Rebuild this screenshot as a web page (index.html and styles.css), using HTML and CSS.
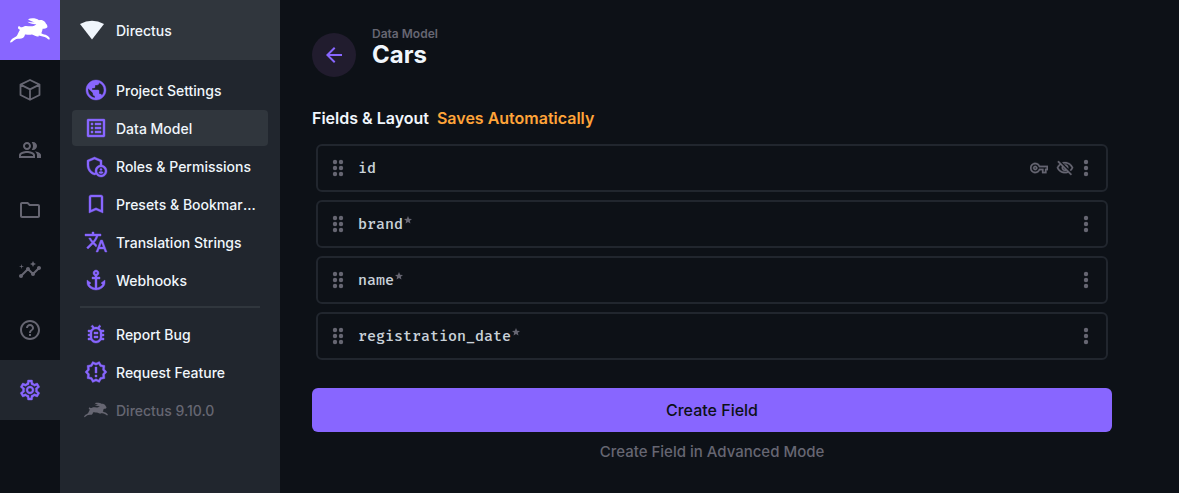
FILE: index.html
```html
<!DOCTYPE html>
<html lang="en">
<head>
<meta charset="utf-8">
<meta name="viewport" content="width=device-width, initial-scale=1">
<title>Cars · Data Model · Directus</title>
<link rel="stylesheet" href="styles.css">
</head>
<body>
<svg class="sprite" aria-hidden="true">
  <symbol id="rabbit" viewBox="0 0 120 74">
    <path d="M0 73C1 67 5 61 13 58C19 56 22 52 24 46C26 42 28 38 30 35C27 34 24 32 24 28C24 24 29 23 32 27C36 28 38 26 43 24C52 22 59 26 67 24C73 23 75 21 79 18C70 19 59 16 52 11C60 13 68 12 74 13C67 9 59 8 54 3C63 -1 79 0 87 6C96 3 107 10 108 17C111 20 113 23 112 27C109 31 103 31 98 32C97 37 96 41 94 45C99 49 106 48 111 52C116 55 120 59 119 63C115 65 112 62 109 59C103 55 94 54 86 52C88 55 83 56 79 54C73 53 70 49 65 49C57 51 50 48 45 49C44 56 40 60 34 61C27 62 20 61 15 65C10 68 7 73 0 73Z"/>
  </symbol>
  <symbol id="dots" viewBox="0 0 24 24"><circle cx="12" cy="6" r="2.2"/><circle cx="12" cy="12" r="2.2"/><circle cx="12" cy="18" r="2.2"/></symbol>
  <symbol id="drag" viewBox="0 0 24 24"><circle cx="9" cy="6" r="2.2"/><circle cx="15" cy="6" r="2.2"/><circle cx="9" cy="12" r="2.2"/><circle cx="15" cy="12" r="2.2"/><circle cx="9" cy="18" r="2.2"/><circle cx="15" cy="18" r="2.2"/></symbol>
  <symbol id="star" viewBox="2 2 20 20"><path d="M12 17.27 18.18 21l-1.64-7.03L22 9.24l-7.19-.61L12 2 9.19 8.63 2 9.24l5.46 4.73L5.82 21z"/></symbol>
</svg>
<div class="app">
  <nav class="modules" aria-label="Modules">
    <a class="module module-logo" href="#" aria-label="Directus"><svg class="logo"><use href="#rabbit"/></svg></a>
    <a class="module" href="#" aria-label="Content"><svg class="icon line" viewBox="0 0 24 24"><path d="M12 2l9.500 4.600v10.400L12 21.800 2.500 17V6.600zM2.500 6.600 12 11.400l9.500-4.800M12 11.400v10.400"/></svg></a>
    <a class="module" href="#" aria-label="Users"><svg class="icon" viewBox="0 0 24 24"><path d="M16.67 13.13C18.04 14.06 19 15.32 19 17v3h4v-3c0-2.18-3.57-3.47-6.33-3.87zM15 12c2.21 0 4-1.790 4-4s-1.790-4-4-4c-.47 0-.91.1-1.330.24C14.500 5.270 15 6.580 15 8s-.5 2.730-1.330 3.760c.42.14.86.24 1.330.24zM9 12c2.210 0 4-1.790 4-4s-1.790-4-4-4-4 1.790-4 4 1.790 4 4 4zm0-6c1.100 0 2 .9 2 2s-.9 2-2 2-2-.9-2-2 .9-2 2-2zm0 7c-2.670 0-8 1.340-8 4v3h16v-3c0-2.660-5.330-4-8-4zm6 5H3v-.99C3.200 16.290 6.300 15 9 15s5.800 1.290 6 2v1z"/></svg></a>
    <a class="module" href="#" aria-label="Files"><svg class="icon" viewBox="0 0 24 24"><path d="M9.170 6l2 2H20v10H4V6h5.170M10 4H4c-1.100 0-1.990.9-1.990 2L2 18c0 1.100.9 2 2 2h16c1.100 0 2-.9 2-2V8c0-1.100-.9-2-2-2h-8l-2-2z"/></svg></a>
    <a class="module" href="#" aria-label="Insights"><svg class="icon" viewBox="0 0 24 24"><path d="M21 8c-1.450 0-2.260 1.440-1.930 2.510l-3.550 3.560c-.3-.09-.74-.09-1.040 0l-2.550-2.550C12.270 10.450 11.460 9 10 9c-1.450 0-2.270 1.440-1.930 2.520l-4.560 4.550C2.440 15.740 1 16.550 1 18c0 1.100.9 2 2 2 1.450 0 2.260-1.440 1.930-2.510l4.550-4.560c.3.09.74.09 1.040 0l2.550 2.550C12.730 16.550 13.540 18 15 18c1.450 0 2.270-1.440 1.930-2.520l3.560-3.550C21.560 12.260 23 11.450 23 10c0-1.100-.9-2-2-2z"/><path d="M15 9l.94-2.070L18 6l-2.060-.93L15 3l-.92 2.070L12 6l2.080.93zM3.500 11L4 9l2-.5L4 8l-.5-2L3 8l-2 .5L3 9z"/></svg></a>
    <a class="module" href="#" aria-label="Help"><svg class="icon" viewBox="0 0 24 24"><path d="M11 18h2v-2h-2v2zm1-16C6.480 2 2 6.480 2 12s4.480 10 10 10 10-4.480 10-10S17.520 2 12 2zm0 18c-4.410 0-8-3.590-8-8s3.590-8 8-8 8 3.590 8 8-3.590 8-8 8zm0-14c-2.210 0-4 1.790-4 4h2c0-1.100.9-2 2-2s2 .9 2 2c0 2-3 1.750-3 5h2c0-2.250 3-2.500 3-5 0-2.210-1.790-4-4-4z"/></svg></a>
    <a class="module module-active" href="#" aria-label="Settings" aria-current="true"><svg class="icon" viewBox="0 0 24 24"><path d="M19.43 12.98c.04-.32.07-.64.07-.98 0-.34-.03-.66-.07-.98l2.11-1.65c.19-.15.24-.42.12-.64l-2-3.46c-.09-.16-.26-.25-.44-.25-.06 0-.12.01-.17.03l-2.49 1c-.52-.4-1.08-.73-1.69-.98l-.38-2.65C14.46 2.18 14.25 2 14 2h-4c-.25 0-.46.18-.49.42l-.38 2.65c-.61.25-1.17.59-1.69.98l-2.49-1c-.06-.02-.12-.03-.18-.03-.17 0-.34.09-.43.25l-2 3.46c-.13.22-.07.49.12.64l2.11 1.65c-.04.32-.07.65-.07.98 0 .33.03.66.07.98l-2.11 1.65c-.19.15-.24.42-.12.64l2 3.46c.09.16.26.25.44.25.06 0 .12-.01.17-.03l2.49-1c.52.4 1.08.73 1.69.98l.38 2.65c.03.24.24.42.49.42h4c.25 0 .46-.18.49-.42l.38-2.65c.61-.25 1.17-.59 1.69-.98l2.49 1c.06.02.12.03.18.03.17 0 .34-.09.43-.25l2-3.46c.12-.22.07-.49-.12-.64l-2.11-1.65zm-1.98-1.71c.04.31.05.52.05.73 0 .21-.02.43-.05.73l-.14 1.13.89.7 1.08.84-.7 1.21-1.27-.51-1.04-.42-.9.68c-.43.32-.84.56-1.25.73l-1.06.43-.16 1.13-.2 1.35h-1.4l-.19-1.35-.16-1.13-1.06-.43c-.43-.18-.83-.41-1.23-.71l-.91-.7-1.06.43-1.27.51-.7-1.21 1.08-.84.89-.7-.14-1.13c-.03-.31-.05-.54-.05-.74s.02-.43.05-.73l.14-1.13-.89-.7-1.08-.84.7-1.21 1.27.51 1.04.42.9-.68c.43-.32.84-.56 1.25-.73l1.06-.43.16-1.13.2-1.35h1.39l.19 1.35.16 1.13 1.06.43c.43.18.83.41 1.23.71l.91.7 1.06-.43 1.27-.51.7 1.21-1.07.85-.89.7.14 1.13zM12 8c-2.21 0-4 1.79-4 4s1.79 4 4 4 4-1.79 4-4-1.79-4-4-4zm0 6c-1.1 0-2-.9-2-2s.9-2 2-2 2 .9 2 2-.9 2-2 2z"/></svg></a>
  </nav>

  <aside class="sidebar">
    <div class="project"><svg class="icon" viewBox="0 0 24 24"><path d="M0 6Q12-.5 24 6L12 21.500z"/></svg><span class="label">Directus</span></div>
    <nav class="menu" aria-label="Settings">
      <a class="item" href="#"><svg class="icon" viewBox="0 0 24 24"><path d="M12 2C6.480 2 2 6.480 2 12s4.480 10 10 10 10-4.480 10-10S17.520 2 12 2zm-1 17.930c-3.950-.49-7-3.850-7-7.930 0-.62.08-1.210.21-1.790L9 15v1c0 1.100.9 2 2 2v1.930zm6.900-2.540c-.26-.81-1-1.390-1.900-1.390h-1v-3c0-.55-.45-1-1-1H8v-2h2c.55 0 1-.45 1-1V7h2c1.100 0 2-.9 2-2v-.41c2.930 1.190 5 4.060 5 7.410 0 2.080-.8 3.970-2.100 5.390z"/></svg><span class="label">Project Settings</span></a>
      <a class="item item-active" href="#" aria-current="page"><svg class="icon" viewBox="0 0 24 24"><path d="M19 5v14H5V5h14m1.100-2H3.900c-.5 0-.9.4-.9.9v16.200c0 .4.4.9.9.9h16.200c.4 0 .9-.5.9-.9V3.900c0-.5-.5-.9-.9-.9zM11 7h6v2h-6V7zm0 4h6v2h-6v-2zm0 4h6v2h-6zM7 7h2v2H7zm0 4h2v2H7zm0 4h2v2H7z"/></svg><span class="label">Data Model</span></a>
      <a class="item" href="#"><svg class="icon" viewBox="0 0 24 24"><path d="M18 11.090V6.270L10.500 3 3 6.270v4.910c0 4.540 3.200 8.790 7.500 9.820.55-.13 1.080-.32 1.600-.55C13.180 21.990 14.970 23 17 23c3.310 0 6-2.690 6-6 0-2.970-2.160-5.430-5-5.910zM11 17c0 .56.08 1.110.23 1.620-.24.11-.48.22-.73.3-3.170-1-5.500-4.240-5.500-7.740v-3.600l5.500-2.400 5.500 2.400v3.510c-2.840.48-5 2.940-5 5.910zm6 4c-2.210 0-4-1.790-4-4s1.790-4 4-4 4 1.790 4 4-1.790 4-4 4z"/><circle cx="17" cy="15.500" r="1.120"/><path d="M17 17.500c-.73 0-2.190.36-2.240 1.080.5.71 1.320 1.170 2.240 1.170s1.740-.46 2.240-1.170c-.05-.72-1.510-1.080-2.240-1.080z"/></svg><span class="label">Roles &amp; Permissions</span></a>
      <a class="item" href="#"><svg class="icon" viewBox="0 0 24 24"><path d="M17 3H7c-1.100 0-1.990.9-1.990 2L5 21l7-3 7 3V5c0-1.100-.9-2-2-2zm0 15l-5-2.180L7 18V5h10v13z"/></svg><span class="label">Presets &amp; Bookmarks</span></a>
      <a class="item" href="#"><svg class="icon" viewBox="0 0 24 24"><path d="M12.870 15.070l-2.540-2.510.03-.03c1.740-1.940 2.980-4.170 3.710-6.530H17V4h-7V2H8v2H1v1.990h11.170C11.500 7.920 10.440 9.750 9 11.350 8.070 10.320 7.300 9.190 6.690 8h-2c.73 1.630 1.730 3.170 2.980 4.560l-5.090 5.020L4 19l5-5 3.110 3.110.76-2.040zM18.500 10h-2L12 22h2l1.120-3h4.750L21 22h2l-4.500-12zm-2.620 7l1.620-4.330L19.120 17h-3.240z"/></svg><span class="label">Translation Strings</span></a>
      <a class="item" href="#"><svg class="icon" viewBox="0 0 24 24"><path d="M13 9V7.820C14.160 7.400 15 6.300 15 5c0-1.650-1.350-3-3-3S9 3.350 9 5c0 1.300.84 2.400 2 2.820V9H8v2h3v8.920c-2.220-.33-4.590-1.680-5.550-3.370L7 15l-4-3v3c0 3.880 4.920 7 9 7s9-3.120 9-7v-3l-4 3 1.550 1.550c-.96 1.690-3.330 3.040-5.550 3.370V11h3V9h-3zm-1-5c.55 0 1 .45 1 1s-.45 1-1 1-1-.45-1-1 .45-1 1-1z"/></svg><span class="label">Webhooks</span></a>
      <hr class="divider">
      <a class="item" href="#"><svg class="icon" viewBox="0 0 24 24"><path d="M20 8h-2.810c-.45-.78-1.070-1.450-1.820-1.960L17 4.410 15.590 3l-2.170 2.170C12.960 5.060 12.490 5 12 5s-.96.06-1.410.17L8.410 3 7 4.410l1.620 1.630C7.880 6.550 7.260 7.220 6.810 8H4v2h2.090c-.05.33-.09.66-.09 1v1H4v2h2v1c0 .34.04.67.09 1H4v2h2.810c1.040 1.790 2.970 3 5.190 3s4.150-1.210 5.190-3H20v-2h-2.090c.05-.33.09-.66.09-1v-1h2v-2h-2v-1c0-.34-.04-.67-.09-1H20V8zm-4 4v3c0 .22-.03.47-.07.7l-.1.65-.37.65c-.72 1.240-2.040 2-3.460 2s-2.740-.77-3.460-2l-.37-.64-.1-.65C8.030 15.480 8 15.230 8 15v-4c0-.23.03-.48.07-.7l.1-.65.37-.65c.3-.52.72-.97 1.210-1.310l.57-.39.74-.18c.31-.08.63-.12.94-.12.32 0 .63.04.95.12l.68.16.61.42c.5.34.91.78 1.210 1.310l.38.65.1.65c.04.22.07.47.07.69v1zm-6 2h4v2h-4zm0-4h4v2h-4z"/></svg><span class="label">Report Bug</span></a>
      <a class="item" href="#"><svg class="icon" viewBox="0 0 24 24"><path d="M23 12l-2.440-2.780.34-3.680-3.610-.82-1.890-3.180L12 3 8.600 1.540 6.710 4.720l-3.610.81.34 3.680L1 12l2.440 2.780-.34 3.690 3.610.82 1.890 3.180L12 21l3.400 1.460 1.890-3.180 3.610-.82-.34-3.680L23 12zm-4.510 2.110l.26 2.790-2.740.62-1.430 2.410L12 18.820l-2.580 1.110-1.430-2.410-2.740-.62.26-2.800L3.660 12l1.850-2.120-.26-2.780 2.740-.61 1.430-2.410L12 5.180l2.580-1.110 1.430 2.410 2.740.62-.26 2.790L20.340 12l-1.850 2.110zM11 15h2v2h-2zm0-8h2v6h-2z"/></svg><span class="label">Request Feature</span></a>
      <a class="item item-version" href="#"><svg class="icon"><use href="#rabbit"/></svg><span class="label">Directus 9.10.0</span></a>
    </nav>
  </aside>

  <main class="main">
    <header class="header">
      <button class="back" type="button" aria-label="Back"><svg class="icon" viewBox="0 0 24 24"><path d="M20 11H7.830l5.590-5.590L12 4l-8 8 8 8 1.410-1.410L7.830 13H20v-2z"/></svg></button>
      <div class="heading">
        <a class="crumb" href="#">Data Model</a>
        <h1 class="title">Cars</h1>
      </div>
    </header>
    <section class="content">
      <h2 class="section-title">Fields &amp; Layout <span class="notice">Saves Automatically</span></h2>
      <ul class="fields">
        <li class="field"><svg class="icon"><use href="#drag"/></svg><span class="name">id</span>
          <span class="flags"><svg class="icon icon-small" viewBox="0 0 24 24"><path d="M22 19h-6v-4h-2.680c-1.140 2.420-3.600 4-6.320 4-3.860 0-7-3.140-7-7s3.140-7 7-7c2.720 0 5.170 1.580 6.320 4H24v6h-2v4zm-4-2h2v-4h2v-2H11.940l-.23-.67C11.010 8.340 9.110 7 7 7c-2.760 0-5 2.240-5 5s2.240 5 5 5c2.110 0 4.010-1.340 4.710-3.330l.23-.67H18v4zM7 15c-1.650 0-3-1.350-3-3s1.350-3 3-3 3 1.350 3 3-1.350 3-3 3zm0-4c-.55 0-1 .45-1 1s.45 1 1 1 1-.45 1-1-.45-1-1-1z"/></svg><svg class="icon icon-small" viewBox="0 0 24 24"><path d="M12 6c3.790 0 7.170 2.130 8.820 5.500-.59 1.220-1.420 2.270-2.410 3.120l1.410 1.410c1.390-1.230 2.490-2.770 3.180-4.530C21.270 7.110 17 4 12 4c-1.270 0-2.490.2-3.640.57l1.650 1.650C10.660 6.090 11.320 6 12 6zm-1.070 1.140L13 9.210c.57.25 1.030.71 1.280 1.280l2.070 2.070c.08-.34.14-.7.14-1.070C16.500 9.010 14.480 7 12 7c-.37 0-.72.05-1.070.14zM2.010 3.870l2.680 2.680C3.060 7.830 1.770 9.530 1 11.500 2.730 15.890 7 19 12 19c1.520 0 2.980-.29 4.320-.82l3.420 3.420 1.410-1.410L3.420 2.450 2.010 3.870zm7.500 7.500l2.610 2.610c-.04.01-.08.02-.12.02-1.380 0-2.500-1.120-2.500-2.500 0-.05.01-.08.01-.13zm-3.400-3.400l1.750 1.750c-.23.55-.36 1.150-.36 1.780 0 2.480 2.020 4.500 4.500 4.500.63 0 1.230-.13 1.770-.36l.98.98c-.88.24-1.800.38-2.750.38-3.790 0-7.170-2.130-8.820-5.500.7-1.430 1.720-2.610 2.930-3.530z"/></svg></span>
          <button class="more" type="button" aria-label="Options for id"><svg class="icon"><use href="#dots"/></svg></button></li>
        <li class="field"><svg class="icon"><use href="#drag"/></svg><span class="name">brand</span><svg class="required"><use href="#star"/></svg>
          <button class="more" type="button" aria-label="Options for brand"><svg class="icon"><use href="#dots"/></svg></button></li>
        <li class="field"><svg class="icon"><use href="#drag"/></svg><span class="name">name</span><svg class="required"><use href="#star"/></svg>
          <button class="more" type="button" aria-label="Options for name"><svg class="icon"><use href="#dots"/></svg></button></li>
        <li class="field"><svg class="icon"><use href="#drag"/></svg><span class="name">registration_date</span><svg class="required"><use href="#star"/></svg>
          <button class="more" type="button" aria-label="Options for registration_date"><svg class="icon"><use href="#dots"/></svg></button></li>
      </ul>
      <button class="create" type="button">Create Field</button>
      <button class="advanced" type="button">Create Field in Advanced Mode</button>
    </section>
  </main>
</div>
</body>
</html>
```
FILE: styles.css
```css
:root {
  --page: #0d1117;
  --panel: #21262e;
  --raised: #30363d;
  --primary: #8866ff;
  --subdued: #666672;
  --text: #f0f6fc;
  --mono-text: #c9d1d9;
  --warning: #ffa439;
}

* { box-sizing: border-box; }

body {
  margin: 0;
  background: var(--page);
  color: var(--text);
  font: 500 14px/24px Inter, "Liberation Sans", sans-serif;
}

a { color: inherit; text-decoration: none; }

button {
  padding: 0;
  border: 0;
  background: none;
  color: inherit;
  font: inherit;
  cursor: pointer;
}

.sprite { position: absolute; width: 0; height: 0; }

.icon {
  display: block;
  flex: none;
  width: 24px;
  height: 24px;
  fill: currentColor;
}

.icon-small {
  width: 18px;
  height: 18px;
  stroke: currentColor;
  stroke-width: 0.4;
}

.line { fill: none; stroke: currentColor; stroke-width: 1.8; stroke-linejoin: round; }

.app { display: flex; min-height: 100vh; }

.modules { flex: none; width: 60px; color: var(--subdued); }

.module {
  display: flex;
  align-items: center;
  justify-content: center;
  height: 60px;
}

.module-logo { background: var(--primary); color: #fff; }

.module-active {
  background: var(--panel);
  color: var(--primary);
  stroke: currentColor;
  stroke-width: 0.4;
}

.logo { width: 40px; height: 25px; fill: currentColor; }

.sidebar { flex: none; width: 220px; background: var(--panel); }

.project {
  display: flex;
  align-items: center;
  gap: 12px;
  height: 60px;
  padding: 0 20px;
  background: var(--raised);
}

.menu {
  display: flex;
  flex-direction: column;
  gap: 2px;
  padding: 12px;
}

.item {
  display: flex;
  align-items: center;
  gap: 8px;
  height: 36px;
  padding: 0 12px;
  border-radius: 4px;
}

.item .icon {
  color: var(--primary);
  stroke: currentColor;
  stroke-width: 0.4;
}

.item-active { background: var(--raised); }

.item-version { color: var(--subdued); }
.item-version .icon { color: inherit; }

.label {
  padding-top: 2px;
  overflow: hidden;
  white-space: nowrap;
  text-overflow: ellipsis;
}

.divider {
  width: auto;
  height: 2px;
  margin: 6px 8px;
  border: 0;
  background: var(--raised);
}

.main { flex: 1; min-width: 0; padding: 26px 32px; }

.header { display: flex; align-items: center; gap: 16px; }

.back {
  display: flex;
  align-items: center;
  justify-content: center;
  width: 44px;
  height: 44px;
  border-radius: 50%;
  background: #211c2e;
  color: var(--primary);
}

.heading { padding-bottom: 16px; }

.crumb {
  display: block;
  color: var(--subdued);
  font-size: 12px;
  line-height: 16px;
  font-weight: 600;
}

.title {
  margin: 0;
  font-size: 24px;
  line-height: 26px;
  font-weight: 700;
}

.content { max-width: 800px; }

.section-title {
  display: flex;
  gap: 8px;
  margin: 22px 0 14px;
  font-size: 16px;
  line-height: 24px;
  font-weight: 600;
}

.notice { color: var(--warning); }

.fields {
  display: flex;
  flex-direction: column;
  gap: 8px;
  margin: 0 4px;
  padding: 0;
  list-style: none;
}

.field {
  display: flex;
  align-items: center;
  height: 48px;
  padding: 0 8px;
  border: 2px solid var(--panel);
  border-radius: 6px;
  color: var(--subdued);
}

.name {
  margin-left: 8px;
  color: var(--mono-text);
  font: 500 15px/24px "Fira Mono", "DejaVu Sans Mono", monospace;
}

.required {
  align-self: flex-start;
  width: 8px;
  height: 8px;
  margin: 14px 0 0 1px;
  fill: currentColor;
}

.flags { display: flex; gap: 8px; margin-left: auto; }

.more { margin-left: auto; }
.flags + .more { margin-left: 0; }

.create {
  display: block;
  width: 100%;
  height: 44px;
  margin-top: 28px;
  border-radius: 6px;
  background: var(--primary);
  color: var(--page);
  font-size: 16px;
  font-weight: 500;
}

.advanced {
  display: block;
  margin: 8px auto 0;
  color: var(--subdued);
  font-size: 15px;
  font-weight: 500;
}
```
